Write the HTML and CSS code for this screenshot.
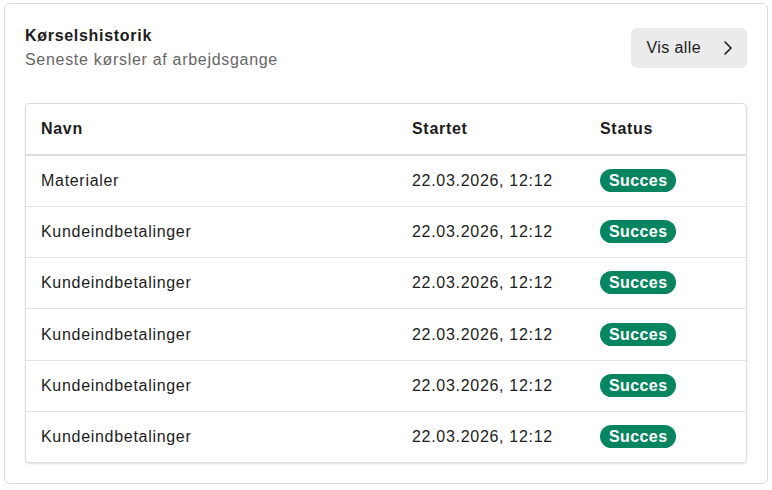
FILE: index.html
```html
<!DOCTYPE html>
<html lang="da">
<head>
    <meta charset="UTF-8">
    <meta name="viewport" content="width=device-width, initial-scale=1.0">
    <title>Kørselshistorik</title>
    <link rel="stylesheet" href="styles.css">
</head>
<body>
    <section class="card">
        <div class="card-header">
            <div>
                <h2 class="card-title">Kørselshistorik</h2>
                <p class="card-subtitle">Seneste kørsler af arbejdsgange</p>
            </div>
            <button class="show-all-btn">Vis alle
                <svg width="16" height="16" viewBox="0 0 16 16"><polyline points="5,2 11,8 5,14" fill="none" stroke="#1a1a1a" stroke-width="1.6" stroke-linecap="round" stroke-linejoin="round"/></svg>
            </button>
        </div>

        <div class="table-wrap">
            <table class="runs">
                <colgroup>
                    <col class="col-name">
                    <col class="col-started">
                    <col>
                </colgroup>
                <thead>
                    <tr><th>Navn</th><th>Startet</th><th>Status</th></tr>
                </thead>
                <tbody>
                    <tr><td>Materialer</td><td>22.03.2026, 12:12</td><td><span class="badge">Succes</span></td></tr>
                    <tr><td>Kundeindbetalinger</td><td>22.03.2026, 12:12</td><td><span class="badge">Succes</span></td></tr>
                    <tr><td>Kundeindbetalinger</td><td>22.03.2026, 12:12</td><td><span class="badge">Succes</span></td></tr>
                    <tr><td>Kundeindbetalinger</td><td>22.03.2026, 12:12</td><td><span class="badge">Succes</span></td></tr>
                    <tr><td>Kundeindbetalinger</td><td>22.03.2026, 12:12</td><td><span class="badge">Succes</span></td></tr>
                    <tr><td>Kundeindbetalinger</td><td>22.03.2026, 12:12</td><td><span class="badge">Succes</span></td></tr>
                </tbody>
            </table>
        </div>
    </section>
</body>
</html>
```

FILE: styles.css
```css
body {
    margin: 0;
    background-color: #fff;
    color: #1c1c1c;
    font-family: "Liberation Sans", Arial, sans-serif;
    font-size: 16px;
    line-height: 24px;
    letter-spacing: 0.7px;
}

.card {
    margin: 3px 4px;
    padding: 20px;
    border: 1px solid #dcdcdc;
    border-radius: 6px;
}

.card-header {
    display: flex;
    justify-content: space-between;
    align-items: center;
}

.card-title {
    margin: 0;
    font-size: 16px;
    font-weight: bold;
    line-height: 24px;
}

.card-subtitle {
    margin: 0;
    color: #666;
}

.show-all-btn {
    display: flex;
    align-items: center;
    gap: 19px;
    height: 40px;
    padding: 0 11px 0 16px;
    border: none;
    border-radius: 6px;
    background-color: #ebebeb;
    color: #1c1c1c;
    font-family: inherit;
    font-size: 16px;
    letter-spacing: 0.4px;
}

.table-wrap {
    margin-top: 31px;
    border: 1px solid #dcdcdc;
    border-radius: 4px;
    box-shadow: 0 1px 2px rgba(0, 0, 0, 0.12);
    overflow: hidden;
}

.runs {
    width: 100%;
    border-collapse: collapse;
    table-layout: fixed;
}

.col-name {
    width: 371px;
}

.col-started {
    width: 188px;
}

.runs th {
    text-align: left;
    font-weight: bold;
    padding: 13px 15px;
    border-bottom: 2px solid #dcdcdc;
}

.runs td {
    padding: 13.08px 15px;
    border-top: 1px solid #e2e2e2;
}

.runs tbody tr:first-child td {
    border-top: none;
}

.badge {
    display: inline-block;
    padding: 0 9px;
    border-radius: 12px;
    background-color: #068560;
    color: #fff;
    font-weight: bold;
    line-height: 23px;
    letter-spacing: 0.4px;
}
```
